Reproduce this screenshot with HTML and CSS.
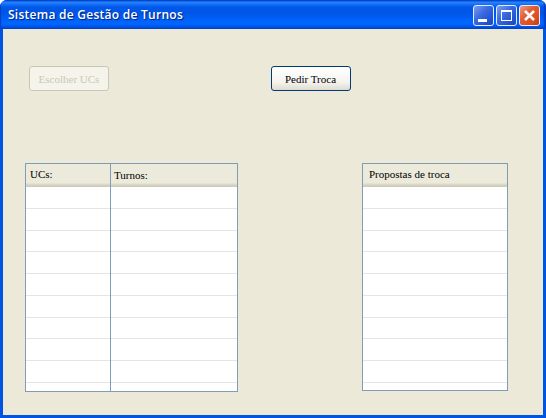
FILE: index.html
```
<!DOCTYPE html>
<html lang="pt">
<head>
<meta charset="utf-8">
<title>Sistema de Gestão de Turnos</title>
<link rel="stylesheet" href="styles.css">
</head>
<body>
<div class="window">
  <header class="titlebar">
    <h1 class="title">Sistema de Gestão de Turnos</h1>
    <div class="controls">
      <span class="control"><svg width="21" height="21" viewBox="0 0 21 21"><path d="M5 14h9v3H5z" fill="#fff"/></svg></span>
      <span class="control"><svg width="21" height="21" viewBox="0 0 21 21"><path d="M5 5h11v11H5zM6 7v8h9V7z" fill="#fff" fill-rule="evenodd"/></svg></span>
      <span class="control close"><svg width="21" height="21" viewBox="0 0 21 21"><path d="M6 6l9 9M15 6l-9 9" stroke="#fff" stroke-width="2.5"/></svg></span>
    </div>
  </header>
  <main class="content">
    <div class="actions">
      <button class="button" disabled>Escolher UCs</button>
      <button class="button">Pedir Troca</button>
    </div>
    <div class="tables">
      <section class="table shifts">
        <div class="column"><div class="head">UCs:</div><div class="rows"><i></i><i></i><i></i><i></i><i></i><i></i><i></i><i></i><i></i></div></div>
        <div class="column"><div class="head lower">Turnos:</div><div class="rows"><i></i><i></i><i></i><i></i><i></i><i></i><i></i><i></i><i></i></div></div>
      </section>
      <section class="table proposals">
        <div class="column"><div class="head">Propostas de troca</div><div class="rows"><i></i><i></i><i></i><i></i><i></i><i></i><i></i><i></i><i></i></div></div>
      </section>
    </div>
  </main>
</div>
</body>
</html>
```

FILE: styles.css
```
* { box-sizing: border-box; }
body { margin: 0; background: #fff; overflow: hidden; }
.window {
  width: 546px;
  height: 418px;
  display: flex;
  flex-direction: column;
  background: #0054e3;
  border-radius: 7px 7px 0 0;
  overflow: hidden;
}
.titlebar {
  height: 29px;
  flex: none;
  display: flex;
  justify-content: space-between;
  padding: 5px 6px 0 8px;
  background: linear-gradient(#0048d0 0, #0048d0 1px, #2c86ff 2px, #1673fa 4px, #0058e8 7px, #0055e5 13px, #0062fa 20px, #0066ff 24px, #005af0 26px, #0040c4 29px);
  box-shadow: inset -3px 0 2px -1px #003cc4, inset 2px 0 1px -1px #003cc4;
}
.title {
  margin: 0;
  font: 600 12px/20px "Open Sans", sans-serif;
  letter-spacing: 0.26px;
  color: #fff;
  text-shadow: 1px 1px 1px #06207f;
  white-space: nowrap;
}
.controls { display: flex; gap: 2px; }
.control {
  width: 21px;
  height: 21px;
  border: 1px solid #e4edff;
  border-radius: 3px;
  background: linear-gradient(135deg, #7d9ff0 0%, #3c6ce2 40%, #2454d2 75%, #1c48b8 100%);
}
.control svg { display: block; margin: -1px; }
.control.close { background: linear-gradient(135deg, #eb9a80 0%, #e25c33 40%, #df4c1f 75%, #bd3b12 100%); }
.content {
  flex: 1;
  margin: 0 3px 3px;
  padding: 37px 35px 0 22px;
  background: #ece9d8;
}
.actions { display: flex; gap: 161.5px; padding-left: 4px; }
.button {
  width: 80px;
  height: 25px;
  padding: 0;
  border: 1px solid #003c74;
  border-radius: 3px;
  background: linear-gradient(#fff, #f5f4ef 65%, #dedbd0);
  font: 11px/22px "Liberation Serif", serif;
  color: #000;
}
.button:disabled { border-color: #c9c7ba; background: #f5f4ea; color: #c9c7ba; }
.tables { display: flex; justify-content: space-between; margin-top: 72px; }
.table { display: flex; height: 229px; border: 1px solid #7f9db9; background: #fff; }
.shifts { width: 213px; }
.proposals { width: 146px; height: 228px; }
.column { flex: 1; display: flex; flex-direction: column; }
.shifts .column:first-child { flex: none; width: 85px; border-right: 1px solid #7f9db9; }
.head {
  height: 23px;
  flex: none;
  padding-left: 4px;
  background: linear-gradient(#ebeadb 19px, #dedbc9 20px, #cbc7b8 23px);
  font: 11px/21px "Liberation Serif", serif;
  color: #000;
}
.lower { line-height: 23px; padding-left: 3px; }
.proposals .head { padding-left: 6px; }
.rows { flex: 1; overflow: hidden; }
.rows i { display: block; height: 21.75px; border-bottom: 1px solid #e4e4e4; }
```
